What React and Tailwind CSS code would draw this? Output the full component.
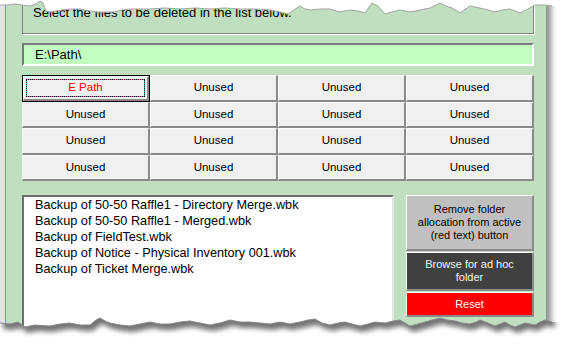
const TOP = [
  [0, 5], [8, 5], [15, 4], [22, 5], [30, 6], [36, 4], [40, 1], [43, 3], [46, 11], [50, 12], [56, 11], [62, 10], [70, 9], [80, 9], [90, 11], [98, 12], [106, 12], [114, 12], [122, 10], [130, 9], [140, 9], [150, 9], [165, 8], [180, 9], [195, 8], [210, 9], [225, 8], [240, 9], [255, 9], [270, 10], [280, 12], [288, 14], [294, 10], [300, 6], [305, 9], [310, 10], [320, 9], [330, 9], [340, 12], [350, 10], [358, 11], [365, 13], [372, 3], [378, 6], [385, 14], [392, 12], [400, 10], [410, 12], [420, 10], [430, 8], [440, 3], [446, 6], [452, 8], [460, 13], [470, 6], [480, 8], [488, 10], [495, 12], [502, 10], [510, 9], [520, 13], [528, 9], [535, 5], [545, 5], [552, 6],
];
const BOT = [
  [0, 323], [10, 324], [18, 322], [25, 327], [35, 325], [50, 326], [60, 324], [70, 323], [80, 325], [90, 325], [96, 320], [100, 318], [105, 321], [110, 323], [120, 325], [130, 326], [140, 324], [150, 322], [160, 324], [170, 324], [180, 322], [190, 321], [200, 323], [210, 325], [220, 323], [230, 320], [240, 322], [250, 322], [260, 323], [270, 324], [280, 322], [290, 324], [300, 322], [308, 320], [315, 319], [322, 323], [330, 325], [338, 323], [345, 322], [352, 324], [360, 326], [368, 324], [375, 322], [385, 323], [393, 321], [400, 320], [405, 323], [410, 326], [418, 324], [425, 322], [432, 320], [440, 318], [447, 320], [455, 321], [462, 323], [470, 324], [476, 322], [480, 320], [488, 323], [495, 326], [500, 324], [505, 322], [510, 325], [515, 327], [520, 325], [525, 323], [530, 324], [535, 325], [540, 322], [545, 320], [552, 322],
];
const pts = (a, dx = 0, dy = 0) => a.map(([x, y]) => `${x + dx},${y + dy}`).join(" ");

function Tear() {
  const topPoly = `0,0 ${pts(TOP)} 562,6 562,0`;
  const botPoly = `${pts(BOT)} 562,322 562,349 0,349`;
  const shadowPoly = `${pts(BOT, 3, 6)} 555,280 3,280`;
  return (
    <svg className="absolute inset-0 pointer-events-none" width="562" height="349" viewBox="0 0 562 349">
      <defs>
        <filter id="blur" x="-10%" y="-50%" width="120%" height="200%">
          <feGaussianBlur stdDeviation="2.4" />
        </filter>
        <clipPath id="below">
          <polygon points={botPoly} />
        </clipPath>
      </defs>
      <polygon points={topPoly} fill="#ffffff" />
      <polyline points={pts(TOP)} fill="none" stroke="#a3a3a3" strokeWidth="1" />
      <polygon points={botPoly} fill="#ffffff" />
      <g clipPath="url(#below)">
        <polygon points={shadowPoly} fill="#000" opacity="0.55" filter="url(#blur)" />
      </g>
      <polyline points={pts(BOT)} fill="none" stroke="#8a8a8a" strokeWidth="1" />
    </svg>
  );
}

const btn3d =
  "border-t border-l border-r-2 border-b-2 border-t-white border-l-white border-r-[#8a8a8a] border-b-[#8a8a8a]";

export default function App() {
  const files = [
    "Backup of 50-50 Raffle1 - Directory Merge.wbk",
    "Backup of 50-50 Raffle1 - Merged.wbk",
    "Backup of FieldTest.wbk",
    "Backup of Notice - Physical Inventory 001.wbk",
    "Backup of Ticket Merge.wbk",
  ];
  const cells = Array.from({ length: 16 }, (_, i) => (i === 0 ? "E Path" : "Unused"));
  return (
    <div className="relative w-[562px] h-[349px] overflow-hidden bg-white font-['Liberation_Sans',Arial,sans-serif] text-black">
      <div className="flex w-[546px] h-[349px] shadow-[5px_0_6px_rgba(0,0,0,0.45)]">
        <div className="w-[5px] bg-[#e3e3e3]" />
        <div className="w-[1px] bg-[#7393d8]" />
        <div className="flex-1 flex flex-col bg-[#c0dfc0] pl-[16px] pr-[12px]">
          <div className="h-[34px] border border-[#808080] shadow-[1px_1px_0_#ffffff] pl-[10px] pt-[4px] text-[13px] leading-[16px] whitespace-nowrap">
            Select the files to be deleted in the list below.
          </div>
          <div className="mt-[9px] h-[23px] flex items-center bg-[#c0ffc0] border-2 border-t-[#7a7a7a] border-l-[#7a7a7a] border-b-white border-r-white pl-[11px] text-[13px]">
            E:\Path\
          </div>
          <div className="mt-[9px] grid grid-cols-4 auto-rows-[26.5px]">
            {cells.map((c, i) =>
              i === 0 ? (
                <div key={i} className="flex border border-black">
                  <div className={`flex-1 flex bg-[#f0f0f0] ${btn3d}`}>
                    <div className="m-[2px] flex-1 flex items-center justify-center border border-[#00c8c8] outline-1 outline-dotted outline-black -outline-offset-1 text-[11.5px] text-[#ff0000]">
                      {c}
                    </div>
                  </div>
                </div>
              ) : (
                <div key={i} className={`flex items-center justify-center bg-[#f0f0f0] text-[11.5px] ${btn3d}`}>
                  {c}
                </div>
              )
            )}
          </div>
          <div className="mt-[14px] flex gap-[12px] flex-1">
            <div className="w-[372px] bg-white border-2 border-t-[#6e6e6e] border-l-[#6e6e6e] border-r-[#e6e6e6] border-b-[#e6e6e6] pl-[11px] text-[12.7px] leading-[16px]">
              {files.map((f) => (
                <div key={f} className="whitespace-nowrap">{f}</div>
              ))}
            </div>
            <div className="w-[128px] flex flex-col gap-[1px] text-[11px] leading-[13px] text-center">
              <div className={`h-[56px] flex items-center justify-center bg-[#c0c0c0] px-1 ${btn3d}`}>
                Remove folder allocation from active (red text) button
              </div>
              <div className={`h-[39px] flex items-center justify-center bg-[#404040] text-[#f4f4f4] px-3 ${btn3d}`}>
                Browse for ad hoc folder
              </div>
              <div className={`h-[25px] flex items-center justify-center bg-[#ff0000] text-white ${btn3d}`}>
                Reset
              </div>
            </div>
          </div>
        </div>
      </div>
      <Tear />
    </div>
  );
}
